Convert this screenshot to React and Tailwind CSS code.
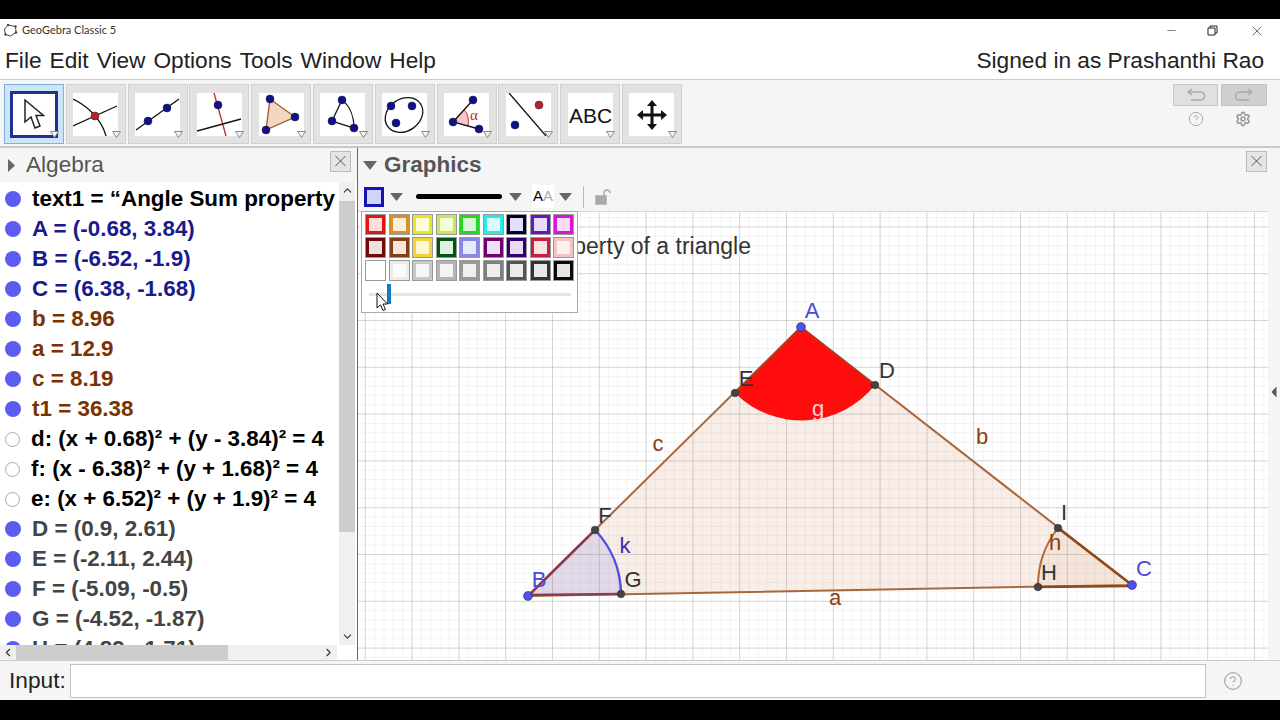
import { ChevronDown, ChevronLeft, ChevronRight, ChevronUp, CircleHelp, Minus, Settings, X } from "lucide-react";

const rows = [
  { text: "text1 = “Angle Sum property", color: "text-black", dot: "bg-[#5c5cf0]" },
  { text: "A = (-0.68, 3.84)", color: "text-[#1a1a8c]", dot: "bg-[#5c5cf0]" },
  { text: "B = (-6.52, -1.9)", color: "text-[#1a1a8c]", dot: "bg-[#5c5cf0]" },
  { text: "C = (6.38, -1.68)", color: "text-[#1a1a8c]", dot: "bg-[#5c5cf0]" },
  { text: "b = 8.96", color: "text-[#7a3300]", dot: "bg-[#5c5cf0]" },
  { text: "a = 12.9", color: "text-[#7a3300]", dot: "bg-[#5c5cf0]" },
  { text: "c = 8.19", color: "text-[#7a3300]", dot: "bg-[#5c5cf0]" },
  { text: "t1 = 36.38", color: "text-[#7a3300]", dot: "bg-[#5c5cf0]" },
  { text: "d: (x + 0.68)² + (y - 3.84)² = 4", color: "text-black", hollow: true },
  { text: "f: (x - 6.38)² + (y + 1.68)² = 4", color: "text-black", hollow: true },
  { text: "e: (x + 6.52)² + (y + 1.9)² = 4", color: "text-black", hollow: true },
  { text: "D = (0.9, 2.61)", color: "text-[#444444]", dot: "bg-[#5c5cf0]" },
  { text: "E = (-2.11, 2.44)", color: "text-[#444444]", dot: "bg-[#5c5cf0]" },
  { text: "F = (-5.09, -0.5)", color: "text-[#444444]", dot: "bg-[#5c5cf0]" },
  { text: "G = (-4.52, -1.87)", color: "text-[#444444]", dot: "bg-[#5c5cf0]" },
  { text: "H = (4.89, -1.71)", color: "text-[#444444]", dot: "bg-[#5c5cf0]" },
];

const swatches = [
  "border-[#e01515] bg-[#fcdcdc]",
  "border-[#d8902c] bg-[#fdeed8]",
  "border-[#e8e820] bg-[#fdfdd8]",
  "border-[#c4ec48] bg-[#f4fcdc]",
  "border-[#28d428] bg-[#d8f8d8]",
  "border-[#28e8e8] bg-[#dcfcfc]",
  "border-[#000028] bg-[#e0e0f8]",
  "border-[#6018c4] bg-[#ecdcfc]",
  "border-[#d418d4] bg-[#fcdcfc]",
  "border-[#700808] bg-[#f0e0e0]",
  "border-[#80401c] bg-[#f6e6da]",
  "border-[#f0d438] bg-[#fff6d4]",
  "border-[#005414] bg-[#e0f0e0]",
  "border-[#8888e4] bg-[#e8e8ff]",
  "border-[#700070] bg-[#f0e0f4]",
  "border-[#300070] bg-[#e8dcf4]",
  "border-[#c42040] bg-[#fce4e4]",
  "border-[#f0c4c4] bg-[#fff0f0]",
  "border-[#ffffff] bg-[#ffffff]",
  "border-[#ececec] bg-[#fafafa]",
  "border-[#c8c8c8] bg-[#f6f6f6]",
  "border-[#b4b4b4] bg-[#f4f4f4]",
  "border-[#999999] bg-[#f0f0f0]",
  "border-[#808080] bg-[#eeeeee]",
  "border-[#555555] bg-[#ebebeb]",
  "border-[#333333] bg-[#e8e8e8]",
  "border-[#0a0a0a] bg-[#e4e4e4]",
];

const Pt = ({ x, y, c = "#10108c", r = 4 }) => <circle cx={x} cy={y} r={r} fill={c} stroke="#222" strokeWidth="0.5" />;

const tools = [
  <>
    <path d="M0 6C11 11 28 24 33 43M0 33L44 13" fill="none" stroke="#111" strokeWidth="1.3" />
    <Pt x={22} y={23} c="#b8202c" />
  </>,
  <>
    <path d="M1 37L44 6" stroke="#111" strokeWidth="1.3" />
    <Pt x={13} y={28} />
    <Pt x={32} y={15} />
  </>,
  <>
    <path d="M17 0L29 43" stroke="#c0262c" strokeWidth="1.3" />
    <path d="M0 38L44 26" stroke="#111" strokeWidth="1.3" />
    <Pt x={21} y={12} />
  </>,
  <>
    <path d="M11 6L36 24L7 37Z" fill="#f3d6c4" stroke="#9c5a30" strokeWidth="1.3" />
    <Pt x={11} y={6} />
    <Pt x={36} y={24} />
    <Pt x={7} y={37} />
  </>,
  <>
    <path d="M12 28L22 7C30 13 34 24 34 35Z" fill="none" stroke="#111" strokeWidth="1.3" />
    <Pt x={22} y={7} />
    <Pt x={12} y={28} />
    <Pt x={34} y={35} />
  </>,
  <>
    <ellipse cx="22" cy="22" rx="20" ry="16" transform="rotate(-35 22 22)" fill="none" stroke="#111" strokeWidth="1.3" />
    <Pt x={9} y={13} />
    <Pt x={30} y={13} />
    <Pt x={14} y={30} />
  </>,
  <>
    <path d="M9 29L20 17C24 20 25 27 24 33Z" fill="#f8c8c8" stroke="none" />
    <path d="M20 17C24 20 25 27 24 33" fill="none" stroke="#c0262c" />
    <path d="M29 7L9 29L35 36" fill="none" stroke="#111" strokeWidth="1.3" />
    <Pt x={9} y={29} />
    <Pt x={29} y={7} />
    <Pt x={35} y={36} />
    <text x="26" y="27" fontSize="15" fill="#c0262c" fontFamily="Liberation Serif, serif">α</text>
  </>,
  <>
    <path d="M3 0L40 43" stroke="#111" strokeWidth="1.3" />
    <Pt x={33} y={12} c="#b8202c" />
    <Pt x={9} y={32} />
  </>,
  <text x="22.5" y="30" fontSize="21" textAnchor="middle" fill="#111" fontFamily="Liberation Sans, sans-serif">ABC</text>,
  <path
    d="M23 7L28 13H24.5V20.5H32V17L38 22L32 27V23.5H24.5V31H28L23 37L18 31H21.5V23.5H14V27L8 22L14 17V20.5H21.5V13H18Z"
    fill="#111"
  />,
];

const ToolCaret = () => (
  <svg className="absolute left-[45px] top-[46px]" width="9" height="7" viewBox="0 0 9 7">
    <path d="M0.5 0.5H8.5L4.5 6.5Z" fill="#f4f4f4" stroke="#888" />
  </svg>
);

const Caret = () => (
  <svg width="13" height="8" viewBox="0 0 13 8">
    <path d="M0 0H13L6.5 8Z" fill="#666" />
  </svg>
);

const CloseBox = () => (
  <div className="w-[21px] h-[21px] flex items-center justify-center border border-[#bbb] bg-[#e4e4e4]">
    <X size={20} strokeWidth={1} color="#333" />
  </div>
);

const Label = ({ x, y, c = "#333", children }) => (
  <text x={x} y={y} fill={c} fontSize="22" textAnchor="middle" fontFamily="Liberation Sans, sans-serif">
    {children}
  </text>
);

// svg viewBox uses page coordinates, easier to read off the picture
const Canvas = () => (
  <svg className="block" width="910" height="448" viewBox="358 212 910 448">
    <defs>
      <pattern id="minor" x="552" y="320" width="9.36" height="9.36" patternUnits="userSpaceOnUse">
        <path d="M9.36 0H0V9.36" fill="none" stroke="#e8e8e8" strokeWidth="1" />
      </pattern>
      <pattern id="major" x="552" y="320" width="46.8" height="46.8" patternUnits="userSpaceOnUse">
        <path d="M46.8 0H0V46.8" fill="none" stroke="#b8b8b8" strokeWidth="1" />
      </pattern>
    </defs>
    <rect x="358" y="212" width="910" height="448" fill="#fff" />
    <rect x="358" y="212" width="910" height="448" fill="url(#minor)" />
    <rect x="358" y="212" width="910" height="448" fill="url(#major)" />

    <text x="751" y="254" textAnchor="end" fontSize="23" fill="#333" fontFamily="Liberation Sans, sans-serif">
      Angle Sum property of a triangle
    </text>

    <path d="M801 327L528 596L1132 585Z" fill="#c8703c" fillOpacity="0.12" stroke="#a8683c" strokeWidth="2" />
    <path d="M801 327L735 393A94 94 0 0 0 875 385Z" fill="#ff0d0d" />
    <path d="M801 327L735 393M801 327L875 385" stroke="#a84020" strokeWidth="1.5" />
    <path d="M528 596L595 530A94 94 0 0 1 621 594Z" fill="#6464f0" fillOpacity="0.15" />
    <path d="M595 530A94 94 0 0 1 621 594" fill="none" stroke="#5050e0" strokeWidth="2.5" />
    <path d="M528 596L595 530M528 595L621 594" stroke="#8c3c50" strokeWidth="2.5" />
    <path d="M1132 585L1058 528A94 94 0 0 0 1038 587Z" fill="#c8703c" fillOpacity="0.08" />
    <path d="M1058 528A94 94 0 0 0 1038 587" fill="none" stroke="#b0683c" strokeWidth="2" />
    <path d="M1132 585L1058 528M1132 586L1038 587" stroke="#904818" strokeWidth="2.5" />

    <Pt x={801} y={327} c="#5050f0" r={4.5} />
    <Pt x={528} y={596} c="#5050f0" r={4.5} />
    <Pt x={1132} y={585} c="#5050f0" r={4.5} />
    <Pt x={735} y={393} c="#444" r={3.8} />
    <Pt x={875} y={385} c="#444" r={3.8} />
    <Pt x={595} y={530} c="#444" r={3.8} />
    <Pt x={621} y={594} c="#444" r={3.8} />
    <Pt x={1038} y={587} c="#444" r={3.8} />
    <Pt x={1058} y={528} c="#444" r={3.8} />

    <Label x={812} y={318} c="#4a4ad8">A</Label>
    <Label x={746} y={386}>E</Label>
    <Label x={887} y={378}>D</Label>
    <Label x={658} y={451} c="#8a4010">c</Label>
    <Label x={982} y={444} c="#8a4010">b</Label>
    <Label x={835} y={605} c="#8a4010">a</Label>
    <Label x={605} y={523}>F</Label>
    <Label x={633} y={587}>G</Label>
    <Label x={625} y={553} c="#3030b0">k</Label>
    <Label x={539} y={587} c="#4a4ad8">B</Label>
    <Label x={1049} y={580}>H</Label>
    <Label x={1055} y={550} c="#8a4010">h</Label>
    <Label x={1064} y={520}>I</Label>
    <Label x={1144} y={576} c="#4a4ad8">C</Label>
    <Label x={818} y={416} c="#ffd0d0">g</Label>
  </svg>
);

const ColorPopup = () => (
  <div className="absolute left-[3px] top-[29px] w-[217px] h-[102px] bg-white border border-[#aaa] pt-[2px] pl-[3px] z-10">
    <div className="grid grid-cols-[repeat(9,21px)] gap-x-[2.5px] gap-y-[2px]">
      {swatches.map((s) => (
        <div key={s} className="w-[21px] h-[21px] border border-[#999] flex">
          <div className={"flex-1 border-[3px] " + s} />
        </div>
      ))}
    </div>
    <div className="relative mt-[3px] ml-[4px] w-[202px] h-[20px] flex items-center">
      <div className="w-full h-[3px] bg-[#e4e4e4]" />
      <div className="absolute left-[18px] top-0 w-[4px] h-[20px] bg-[#1878c0]" />
      <svg className="absolute left-[7px] top-[8px]" width="13" height="20" viewBox="0 0 13 20">
        <path d="M1 1V16L4.5 12.8L7 18.5L9.5 17.4L7 12H11.5Z" fill="#fff" stroke="#111" />
      </svg>
    </div>
  </div>
);

export default function App() {
  return (
    <div className="w-[1280px] h-[720px] flex flex-col overflow-hidden bg-black font-['Liberation_Sans',Arial,sans-serif]">
      <div className="h-[19px] shrink-0 bg-black" />

      {/* title bar */}
      <div className="h-[23px] shrink-0 bg-white flex items-center pl-[3px]">
        <svg width="15" height="15" viewBox="0 0 15 15">
          <path d="M5 2L12.5 3.5L13 9.5L7.5 13L2.5 11.5L1.5 6Z" fill="none" stroke="#444" strokeWidth="1" />
          <circle cx="5" cy="2" r="1.2" fill="#444" />
          <circle cx="12.5" cy="3.5" r="1.2" fill="#444" />
          <circle cx="13" cy="9.5" r="1.2" fill="#444" />
          <circle cx="2.5" cy="11.5" r="1.2" fill="#444" />
        </svg>
        <span className="ml-[4px] text-[11px] text-[#333] font-['Lato',sans-serif]">GeoGebra Classic 5</span>
        <div className="ml-auto flex items-center">
          <Minus size={13} strokeWidth={1} color="#222" className="mr-[29px]" />
          <svg width="11" height="11" viewBox="0 0 11 11" className="mr-[31px]">
            <path d="M1 3H8V10H1ZM3 3V1H10V8H8" fill="none" stroke="#222" />
          </svg>
          <X size={16} strokeWidth={1} color="#222" className="mr-[15px]" />
        </div>
      </div>

      {/* menu */}
      <div className="h-[38px] shrink-0 bg-white flex items-center pl-[5px] pr-[16px] text-[22.7px] text-[#222] border-b border-[#ccc]">
        <div className="flex gap-[8px]">
          {["File", "Edit", "View", "Options", "Tools", "Window", "Help"].map((m) => (
            <span key={m}>{m}</span>
          ))}
        </div>
        <span className="ml-auto">Signed in as Prashanthi Rao</span>
      </div>

      {/* toolbar */}
      <div className="h-[68px] shrink-0 bg-[#f5f5f5] flex items-start pt-[4px] pl-[4px] border-b-2 border-[#c8c8c8]">
        <div className="relative w-[60px] h-[60px] shrink-0 border border-[#7fb0d8] bg-[#cbe6fa] flex items-center justify-center mr-[1.8px]">
          <div className="w-[48px] h-[47px] border-[3px] border-[#20308c] bg-white flex items-center justify-center">
            <svg width="22" height="32" viewBox="0 0 22 32">
              <path d="M2 2V24L8 19L12 30L17 28L13 17.5H20.5Z" fill="#fff" stroke="#222" strokeWidth="1.5" />
            </svg>
          </div>
          <ToolCaret />
        </div>
        {tools.map((t, i) => (
          <div
            key={i}
            className="relative w-[60px] h-[60px] shrink-0 border border-[#d0d0d0] bg-[#e2e2e2] flex items-center justify-center mr-[1.8px]"
          >
            <div className="w-[45px] h-[43px] bg-white">
              <svg width="45" height="43" viewBox="0 0 45 43" className="block">
                {t}
              </svg>
            </div>
            <ToolCaret />
          </div>
        ))}
        <div className="ml-auto mr-[13px] flex flex-col">
          <div className="flex gap-[3px]">
            <div className="w-[45px] h-[22px] bg-[#e0e0e0] border border-[#c8c8c8] flex items-center justify-center">
              <svg width="20" height="14" viewBox="0 0 20 14">
                <path d="M6 1L2 4L6 7M2 4H14C20 4 20 12 14 12H5" fill="none" stroke="#aaa" strokeWidth="1.4" />
              </svg>
            </div>
            <div className="w-[46px] h-[22px] bg-[#cfcfcf] border border-[#c4c4c4] flex items-center justify-center">
              <svg width="20" height="14" viewBox="0 0 20 14">
                <path d="M14 1L18 4L14 7M18 4H6C0 4 0 12 6 12H15" fill="none" stroke="#aaa" strokeWidth="1.4" />
              </svg>
            </div>
          </div>
          <div className="flex mt-[5px] pl-[15px] gap-[31px]">
            <CircleHelp size={16} color="#aaa" strokeWidth={1.5} />
            <Settings size={16} color="#999" strokeWidth={2.4} />
          </div>
        </div>
      </div>

      {/* main */}
      <div className="h-[512px] shrink-0 flex bg-[#f5f5f5]">
        <div className="w-[358px] shrink-0 flex flex-col border-r border-[#666]">
          <div className="h-[34px] shrink-0 flex items-center pl-[7px] pr-[6px] text-[22.6px] text-[#555]">
            <svg width="9" height="13" viewBox="0 0 9 13">
              <path d="M1 0L8 6.5L1 13Z" fill="#666" />
            </svg>
            <span className="ml-[10px]">Algebra</span>
            <div className="ml-auto mb-[8px]">
              <CloseBox />
            </div>
          </div>
          <div className="flex-1 flex min-h-0 bg-white">
            <div className="w-[337px] flex flex-col min-h-0">
              <div className="flex-1 min-h-0 overflow-hidden pt-[2px]">
                {rows.map((r) => (
                  <div key={r.text} className="h-[30px] flex items-center pl-[5px] whitespace-nowrap">
                    {r.hollow ? (
                      <div className="w-[15px] h-[15px] rounded-full border border-[#aaa] bg-white shrink-0" />
                    ) : (
                      <div className={"w-[16px] h-[16px] rounded-full shrink-0 " + r.dot} />
                    )}
                    <span className={"ml-[11px] font-bold text-[22.4px] " + r.color}>{r.text}</span>
                  </div>
                ))}
              </div>
              <div className="h-[15px] shrink-0 bg-[#f0f0f0] flex items-center">
                <ChevronLeft size={13} color="#333" className="w-[16px] shrink-0" />
                <div className="w-[212px] h-full bg-[#cdcdcd]" />
                <ChevronRight size={13} color="#333" className="ml-auto mr-[2px]" />
              </div>
            </div>
            <div className="w-[16px] mb-[15px] ml-[2px] bg-[#f0f0f0] flex flex-col items-center">
              <ChevronUp size={13} color="#333" className="mt-[2px] h-[13px]" />
              <div className="w-full h-[331px] mt-[4px] bg-[#cdcdcd]" />
              <ChevronDown size={13} color="#333" className="mt-auto mb-[2px]" />
            </div>
          </div>
        </div>

        <div className="flex-1 flex flex-col min-w-0">
          <div className="h-[34px] shrink-0 flex items-center pl-[5px] text-[22.5px] font-bold text-[#555]">
            <svg width="14" height="9" viewBox="0 0 14 9">
              <path d="M0 0H14L7 9Z" fill="#666" />
            </svg>
            <span className="ml-[7px]">Graphics</span>
            <div className="ml-auto mr-[13px] mb-[8px]">
              <CloseBox />
            </div>
          </div>
          <div className="flex flex-1 min-h-0">
            <div className="relative flex-1 min-w-0 flex flex-col">
              <div className="h-[30px] shrink-0 flex items-center pl-[6px] border-b border-[#d8d8d8]">
                <div className="w-[20px] h-[20px] border-[3px] border-[#1414b4] bg-[#d0d4f8]" />
                <div className="ml-[6px]">
                  <Caret />
                </div>
                <div className="ml-[13px] w-[86px] h-[5px] rounded-full bg-black" />
                <div className="ml-[7px]">
                  <Caret />
                </div>
                <span className="ml-[10px] w-[22px] text-[15px] bg-white text-center">
                  <span className="text-black">A</span>
                  <span className="text-[#aaa]">A</span>
                </span>
                <div className="ml-[5px]">
                  <Caret />
                </div>
                <div className="ml-[11px] w-px h-[22px] bg-[#bbb]" />
                <svg className="ml-[9px]" width="18" height="18" viewBox="0 0 18 18">
                  <path d="M3 8H13V16H3Z" fill="#aaa" stroke="#aaa" strokeWidth="1.5" />
                  <path d="M11 8V5C11 1 17 1 17 5" fill="none" stroke="#aaa" strokeWidth="1.5" />
                </svg>
              </div>
              <div className="flex-1 min-h-0">
                <Canvas />
              </div>
              <ColorPopup />
            </div>
            <div className="w-[12px] shrink-0 flex justify-center pt-[204px] bg-[#f5f5f5]">
              <svg width="6" height="12" viewBox="0 0 6 12">
                <path d="M5.5 0.5L0.5 6L5.5 11.5Z" fill="#555" />
              </svg>
            </div>
          </div>
        </div>
      </div>

      {/* input bar */}
      <div className="h-[40px] shrink-0 bg-[#f5f5f5] flex items-center pl-[9px] border-t border-[#ccc]">
        <span className="text-[22.7px] text-[#222] w-[61px]">Input:</span>
        <div className="w-[1136px] h-[34px] bg-white border border-[#c4c4c4]" />
        <CircleHelp size={20} color="#aaa" strokeWidth={1.5} className="ml-[17px]" />
      </div>

      <div className="flex-1 bg-black" />
    </div>
  );
}
